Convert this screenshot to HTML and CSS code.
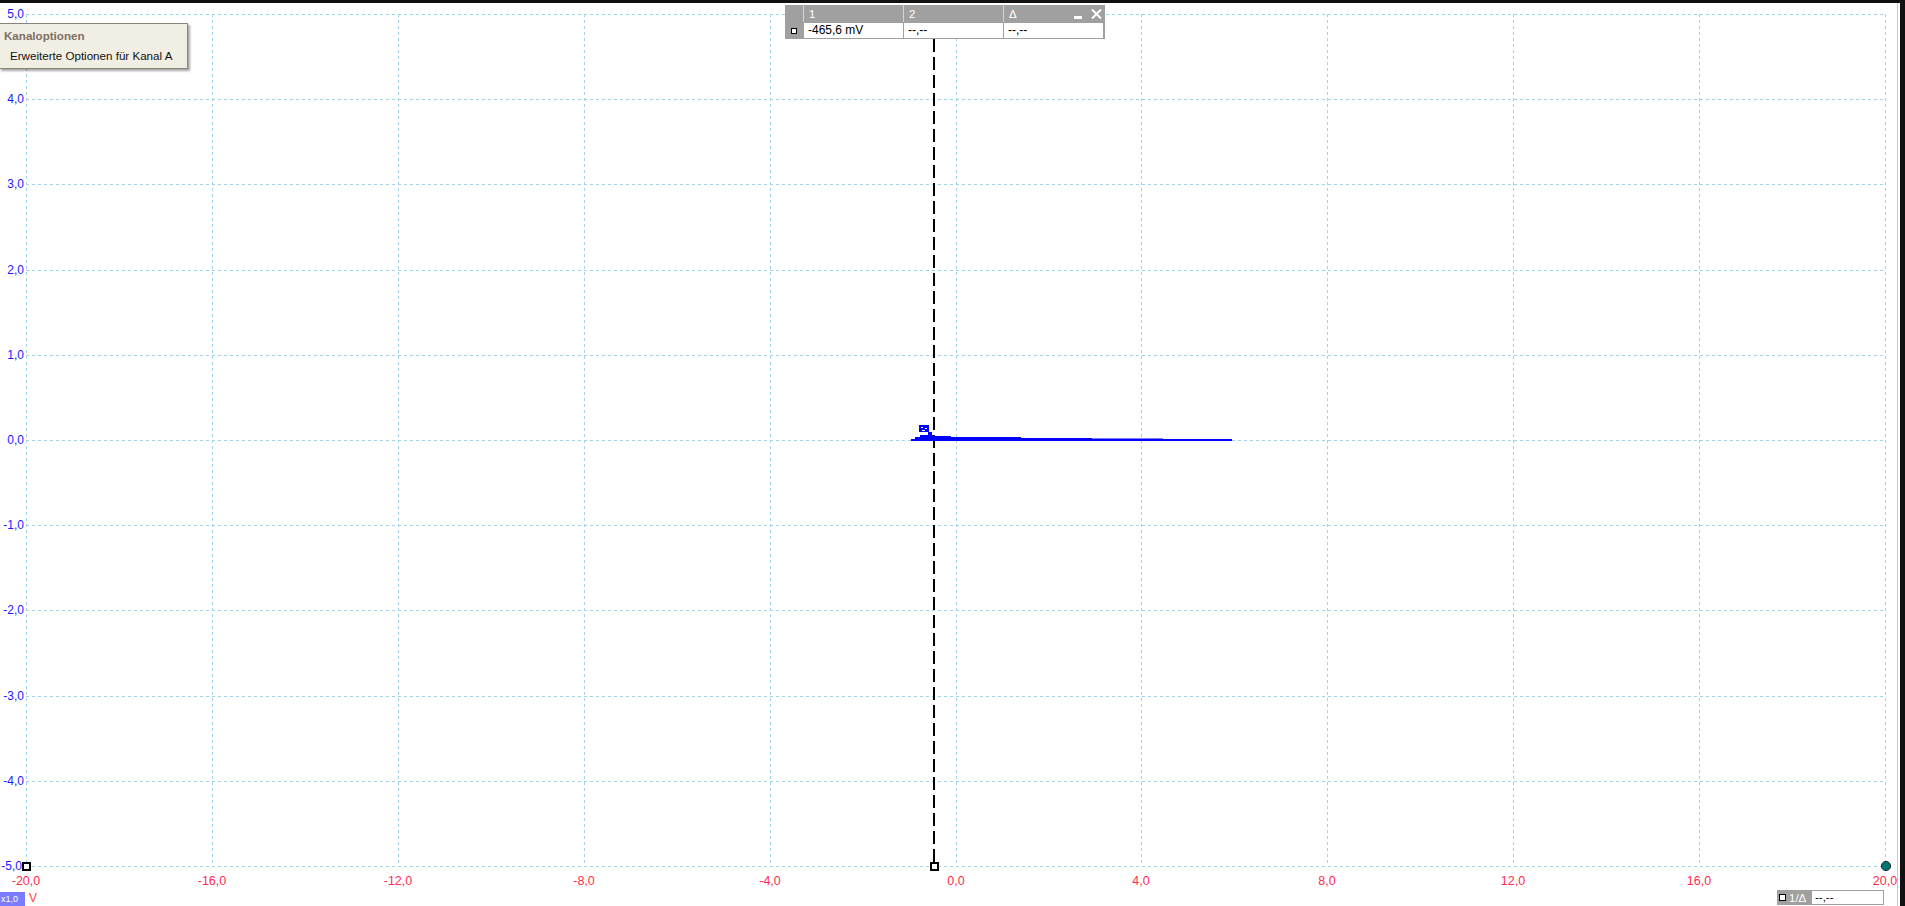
FILE: index.html
```html
<!DOCTYPE html>
<html lang="de">
<head>
<meta charset="utf-8">
<title>Oszilloskop</title>
<link rel="stylesheet" href="styles.css">
</head>
<body>
<div class="screen">
  <svg class="plot" width="1905" height="906" viewBox="0 0 1905 906" xmlns="http://www.w3.org/2000/svg">
    <g class="grid">
      <line x1="26.5" y1="14" x2="26.5" y2="866"/>
      <line x1="212.5" y1="14" x2="212.5" y2="866"/>
      <line x1="398.5" y1="14" x2="398.5" y2="866"/>
      <line x1="584.5" y1="14" x2="584.5" y2="866"/>
      <line x1="770.5" y1="14" x2="770.5" y2="866"/>
      <line x1="956.5" y1="14" x2="956.5" y2="866"/>
      <line x1="1141.5" y1="14" x2="1141.5" y2="866"/>
      <line x1="1327.5" y1="14" x2="1327.5" y2="866"/>
      <line x1="1513.5" y1="14" x2="1513.5" y2="866"/>
      <line x1="1699.5" y1="14" x2="1699.5" y2="866"/>
      <line x1="1885.5" y1="14" x2="1885.5" y2="866"/>
      <line x1="26" y1="14.5" x2="1886" y2="14.5"/>
      <line x1="26" y1="99.5" x2="1886" y2="99.5"/>
      <line x1="26" y1="184.5" x2="1886" y2="184.5"/>
      <line x1="26" y1="270.5" x2="1886" y2="270.5"/>
      <line x1="26" y1="355.5" x2="1886" y2="355.5"/>
      <line x1="26" y1="440.5" x2="1886" y2="440.5"/>
      <line x1="26" y1="525.5" x2="1886" y2="525.5"/>
      <line x1="26" y1="610.5" x2="1886" y2="610.5"/>
      <line x1="26" y1="696.5" x2="1886" y2="696.5"/>
      <line x1="26" y1="781.5" x2="1886" y2="781.5"/>
      <line x1="26" y1="866.5" x2="1886" y2="866.5"/>
    </g>
    <g class="ylabels">
      <text x="24" y="14">5,0</text>
      <text x="24" y="99">4,0</text>
      <text x="24" y="184">3,0</text>
      <text x="24" y="270">2,0</text>
      <text x="24" y="355">1,0</text>
      <text x="24" y="440">0,0</text>
      <text x="24" y="525">-1,0</text>
      <text x="24" y="610">-2,0</text>
      <text x="24" y="696">-3,0</text>
      <text x="24" y="781">-4,0</text>
      <text x="22" y="866">-5,0</text>
    </g>
    <g class="xlabels">
      <text x="26" y="881">-20,0</text>
      <text x="212" y="881">-16,0</text>
      <text x="398" y="881">-12,0</text>
      <text x="584" y="881">-8,0</text>
      <text x="770" y="881">-4,0</text>
      <text x="956" y="881">0,0</text>
      <text x="1141" y="881">4,0</text>
      <text x="1327" y="881">8,0</text>
      <text x="1513" y="881">12,0</text>
      <text x="1699" y="881">16,0</text>
      <text x="1885" y="881">20,0</text>
    </g>
    <line class="cursor" x1="934" y1="862" x2="934" y2="14"/>
    <g class="trace">
      <rect x="911" y="439" width="321" height="2"/>
      <rect x="930" y="436" width="21" height="5"/>
      <rect x="951" y="437" width="70" height="4"/>
      <rect x="1021" y="438" width="71" height="3"/>
      <rect x="1092" y="438.5" width="71" height="2.5"/>
      <rect x="915" y="437" width="20" height="2"/>
      <rect x="920" y="435" width="13" height="2"/>
      <rect x="928" y="432" width="4" height="4"/>
      <rect x="919" y="425" width="10" height="7"/>
    </g>
    <g class="trace-holes">
      <rect x="921" y="427" width="2" height="1"/>
      <rect x="925" y="428" width="2" height="1"/>
      <rect x="922" y="430" width="3" height="1"/>
    </g>
    <rect class="marker" x="23" y="863" width="7" height="7"/>
    <rect class="marker" x="931" y="863" width="7" height="7"/>
    <circle class="dot" cx="1886" cy="866" r="4.6"/>
    <rect class="frame" x="0" y="0" width="1905" height="3"/>
    <rect class="frame" x="1900" y="0" width="5" height="906"/>
    <rect class="frame-inner" x="1897" y="3" width="1" height="903"/>
  </svg>

  <div class="tooltip">
    <div class="tip-title">Kanaloptionen</div>
    <div class="tip-text">Erweiterte Optionen für Kanal A</div>
  </div>

  <div class="meas">
    <div class="meas-head">
      <span class="mh-cell"></span>
      <span class="mh-cell"><span class="mh-text">1</span></span>
      <span class="mh-cell"><span class="mh-text">2</span></span>
      <span class="mh-cell"><span class="mh-text">Δ</span><i class="ctl-min"></i>
        <svg class="ctl-close" width="11" height="10" viewBox="0 0 11 10"><path d="M1 0.5 L10 9.5 M10 0.5 L1 9.5"/></svg>
      </span>
    </div>
    <div class="meas-row">
      <span class="mr-sq"><i class="sq"></i></span>
      <span class="mr-val">-465,6 mV</span>
      <span class="mr-val">--,--</span>
      <span class="mr-val">--,--</span>
    </div>
  </div>

  <div class="ruler">
    <div class="ruler-label"><i class="ruler-sq"></i>1/Δ</div>
    <div class="ruler-val">--,--</div>
  </div>

  <div class="scale-badge">x1,0</div>
  <span class="unit">V</span>
</div>
</body>
</html>
```

FILE: styles.css
```css
html, body {
  margin: 0;
  padding: 0;
  background: #ffffff;
}

body {
  width: 1905px;
  height: 906px;
  overflow: hidden;
  font-family: "Liberation Sans", Arial, sans-serif;
}

.screen {
  position: relative;
  width: 1905px;
  height: 906px;
}

.plot {
  display: block;
}

.grid line {
  stroke: #9fd5e6;
  stroke-width: 1;
  stroke-dasharray: 3 3;
  fill: none;
}

.ylabels text {
  fill: #1a1aff;
  font-family: "Liberation Sans", Arial, sans-serif;
  font-size: 12px;
  text-anchor: end;
  dominant-baseline: central;
}

.xlabels text {
  fill: #ff2d4d;
  font-family: "Liberation Sans", Arial, sans-serif;
  font-size: 12.5px;
  text-anchor: middle;
  dominant-baseline: central;
}

.cursor {
  stroke: #000000;
  stroke-width: 2;
  stroke-dasharray: 13 5;
}

.trace rect {
  fill: #0000ff;
}

.trace-holes rect {
  fill: #ffffff;
}

.marker {
  fill: #ffffff;
  stroke: #000000;
  stroke-width: 2;
}

.dot {
  fill: #007575;
  stroke: #1a2a2a;
  stroke-width: 1;
}

.frame {
  fill: #111111;
}

.frame-inner {
  fill: #c8c8c8;
}

/* Tooltip */
.tooltip {
  position: absolute;
  left: -1px;
  top: 23px;
  width: 189px;
  height: 46px;
  box-sizing: border-box;
  background: #f1eee3;
  border: 1px solid #8c8478;
  box-shadow: 2px 2px 2px rgba(0, 0, 0, 0.35);
  font-size: 11.6px;
  padding: 5px 0 0 4px;
}

.tip-title {
  font-weight: bold;
  color: #7d7064;
  line-height: 14px;
}

.tip-text {
  color: #111111;
  line-height: 14px;
  margin-top: 6px;
  padding-left: 6px;
}

/* Measurement box */
.meas {
  position: absolute;
  left: 785px;
  top: 5px;
  width: 320px;
  box-sizing: border-box;
  padding: 0 3px 1px 0;
  background: #a0a0a0;
  font-size: 11.5px;
}

.meas-head,
.meas-row {
  display: grid;
  grid-template-columns: 18px 99px 99px 99px;
  column-gap: 1px;
}

.meas-head {
  height: 17px;
  background: #d6d6d6;
}

.mh-cell {
  display: flex;
  align-items: flex-start;
  background: #a0a0a0;
  color: #ffffff;
  padding: 2px 0 0 5px;
  box-sizing: border-box;
  height: 17px;
}

.mh-text {
  line-height: 15px;
}

.ctl-min {
  display: block;
  margin-left: auto;
  margin-top: 9px;
  width: 8px;
  height: 3px;
  background: #ffffff;
}

.ctl-close {
  display: block;
  margin: 2px 1px 0 9px;
}

.ctl-close path {
  stroke: #ffffff;
  stroke-width: 2;
  fill: none;
}

.meas-row {
  margin-top: 1px;
  height: 15px;
}

.mr-sq {
  display: flex;
  align-items: center;
  justify-content: center;
}

.sq {
  display: block;
  width: 6px;
  height: 6px;
  box-sizing: border-box;
  border: 1px solid #000000;
  background: #ffffff;
}

.mr-val {
  background: #ffffff;
  color: #000000;
  font-size: 12px;
  height: 15px;
  box-sizing: border-box;
  padding: 0 0 0 4px;
  line-height: 15px;
  white-space: nowrap;
}

/* Ruler box bottom right */
.ruler {
  position: absolute;
  left: 1777px;
  top: 890px;
  width: 107px;
  height: 15px;
  box-sizing: border-box;
  background: #a0a0a0;
  display: flex;
  padding: 1px 1px 1px 0;
}

.ruler-label {
  width: 35px;
  display: flex;
  align-items: center;
  color: #ffffff;
  font-size: 11.5px;
}

.ruler-sq {
  display: block;
  width: 7px;
  height: 7px;
  box-sizing: border-box;
  border: 1.5px solid #000000;
  background: #ffffff;
  margin: 0 3px 0 2px;
}

.ruler-val {
  flex: 1;
  background: #ffffff;
  color: #000000;
  font-size: 11.5px;
  line-height: 13px;
  padding-left: 3px;
}

/* Channel scale badge */
.scale-badge {
  position: absolute;
  left: 0;
  top: 892px;
  width: 25px;
  height: 14px;
  background: #7b7bff;
  color: #ffffff;
  font-size: 9px;
  line-height: 14px;
  padding-left: 1px;
  box-sizing: border-box;
  white-space: nowrap;
}

.unit {
  position: absolute;
  left: 29px;
  top: 891px;
  color: #ff4545;
  font-size: 12px;
  line-height: 14px;
}
```
